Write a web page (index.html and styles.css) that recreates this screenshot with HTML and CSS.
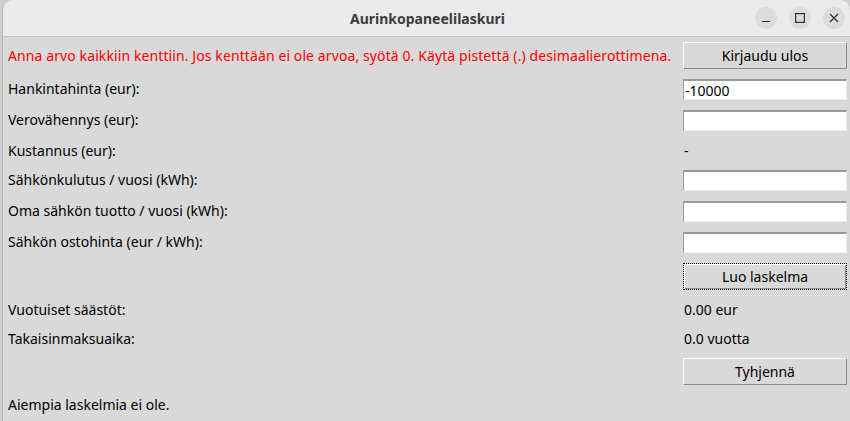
FILE: index.html
```html
<!DOCTYPE html>
<html lang="fi">
<head>
<meta charset="utf-8">
<title>Aurinkopaneelilaskuri</title>
<link rel="stylesheet" href="styles.css">
</head>
<body>
<div class="window">
  <header class="titlebar">
    <div class="title">Aurinkopaneelilaskuri</div>
    <div class="controls">
      <span class="ctl"><svg width="10" height="10" viewBox="0 0 10 10"><path d="M1 8.5h8" stroke="#2e2e2e" stroke-width="1.2"/></svg></span>
      <span class="ctl"><svg width="10" height="10" viewBox="0 0 10 10"><rect x="0.6" y="0.6" width="8.8" height="8.8" fill="none" stroke="#2e2e2e" stroke-width="1.2"/></svg></span>
      <span class="ctl"><svg width="10" height="10" viewBox="0 0 10 10"><path d="M1 1L9 9M9 1L1 9" stroke="#2e2e2e" stroke-width="1.2"/></svg></span>
    </div>
  </header>
  <main class="form">
    <div class="cell lbl warn">Anna arvo kaikkiin kenttiin. Jos kenttään ei ole arvoa, syötä 0. Käytä pistettä (.) desimaalierottimena.</div>
    <div class="cell w"><button class="btn">Kirjaudu ulos</button></div>

    <div class="cell lbl">Hankintahinta (eur):</div>
    <div class="cell w"><input class="entry" type="text" value="-10000"></div>

    <div class="cell lbl">Verovähennys (eur):</div>
    <div class="cell w"><input class="entry" type="text" value=""></div>

    <div class="cell lbl">Kustannus (eur):</div>
    <div class="cell w val">-</div>

    <div class="cell lbl">Sähkönkulutus / vuosi (kWh):</div>
    <div class="cell w"><input class="entry" type="text" value=""></div>

    <div class="cell lbl">Oma sähkön tuotto / vuosi (kWh):</div>
    <div class="cell w"><input class="entry" type="text" value=""></div>

    <div class="cell lbl">Sähkön ostohinta (eur / kWh):</div>
    <div class="cell w"><input class="entry" type="text" value=""></div>

    <div class="cell lbl"></div>
    <div class="cell w"><button class="btn focus">Luo laskelma</button></div>

    <div class="cell lbl">Vuotuiset säästöt:</div>
    <div class="cell w val">0.00 eur</div>

    <div class="cell lbl">Takaisinmaksuaika:</div>
    <div class="cell w val">0.0 vuotta</div>

    <div class="cell lbl"></div>
    <div class="cell w"><button class="btn">Tyhjennä</button></div>

    <div class="cell lbl">Aiempia laskelmia ei ole.</div>
    <div class="cell w"></div>
  </main>
</div>
</body>
</html>
```

FILE: styles.css
```css
html, body {
  margin: 0;
  padding: 0;
  width: 850px;
  height: 421px;
  overflow: hidden;
  background: #cfcfcf;
}

.window {
  margin-left: 2px;
  width: 848px;
  height: 421px;
  background: #d9d9d9;
  border-left: 1px solid #b4b4b4;
  border-radius: 10px 10px 0 0;
  overflow: hidden;
  box-sizing: border-box;
  font-family: "Noto Sans", "DejaVu Sans", sans-serif;
  font-size: 14px;
  color: #000;
}

.titlebar {
  position: relative;
  height: 36px;
  background: #ebebeb;
  border-bottom: 1px solid #c2c2c2;
  display: flex;
  align-items: center;
  justify-content: center;
}

.title {
  font-weight: bold;
  font-size: 14px;
  color: #3c3c3c;
  margin-left: 2px;
}

.controls {
  position: absolute;
  right: 5px;
  top: 7px;
  display: flex;
  gap: 12px;
}

.ctl {
  width: 22px;
  height: 22px;
  border-radius: 50%;
  background: #dcdcdc;
  display: flex;
  align-items: center;
  justify-content: center;
}

.form {
  display: grid;
  grid-template-columns: 1fr 164px;
  column-gap: 10px;
  padding: 0 3px 0 5px;
}

.cell {
  padding: 5px 0;
  display: flex;
  align-items: center;
  height: 19px;
}

.lbl {
  white-space: nowrap;
}

.warn {
  color: #ff0000;
  height: 27px;
  letter-spacing: 0.1px;
}

.val {
  padding-left: 1px;
}

.btn {
  width: 164px;
  height: 27px;
  margin: 0;
  padding: 0;
  background: #d9d9d9;
  font-family: inherit;
  font-size: 14px;
  color: #000;
  border: 1px solid;
  border-color: #ffffff #8a8a8a #8a8a8a #ffffff;
  box-sizing: border-box;
}

.cell:has(.btn) {
  height: 27px;
}

.cell:has(.entry) {
  height: 21px;
}

.btn.focus {
  border: 1px dotted #000;
  box-shadow: inset 1px 1px 0 #ffffff, inset -1px -1px 0 #8a8a8a;
}

.entry {
  width: 164px;
  height: 21px;
  margin: 0;
  padding: 0 0 0 1px;
  box-sizing: border-box;
  background: #ffffff;
  border: 1px solid;
  border-width: 2px 1px 1px 1px;
  border-color: #9a9a9a #eeeeee #eeeeee #9a9a9a;
  font-family: inherit;
  font-size: 14px;
  color: #000;
  outline: none;
}
```
